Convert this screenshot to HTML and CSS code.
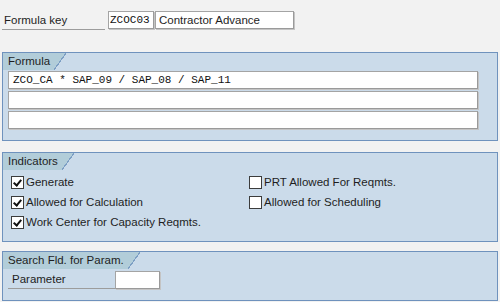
FILE: index.html
```html
<!DOCTYPE html>
<html>
<head>
<meta charset="utf-8">
<link rel="stylesheet" href="styles.css">
</head>
<body>
<div class="keyrow">
  <div class="keylabel">Formula key</div>
  <div class="field mono key">ZCOC03</div>
  <div class="field desc">Contractor Advance</div>
</div>

<section class="group g-formula">
  <div class="tab"><span>Formula</span></div>
  <div class="lines">
    <div class="field mono line">ZCO_CA * SAP_09 / SAP_08 / SAP_11</div>
    <div class="field line"></div>
    <div class="field line"></div>
  </div>
</section>

<section class="group g-ind">
  <div class="tab"><span>Indicators</span></div>
  <div class="checks">
    <div class="col">
      <label class="cb"><span class="box on"></span>Generate</label>
      <label class="cb"><span class="box on"></span>Allowed for Calculation</label>
      <label class="cb"><span class="box on"></span>Work Center for Capacity Reqmts.</label>
    </div>
    <div class="col">
      <label class="cb"><span class="box"></span>PRT Allowed For Reqmts.</label>
      <label class="cb"><span class="box"></span>Allowed for Scheduling</label>
    </div>
  </div>
</section>

<section class="group g-search">
  <div class="tab"><span>Search Fld. for Param.</span></div>
  <div class="paramrow">
    <div class="plabel">Parameter</div>
    <div class="field pinput"></div>
  </div>
</section>
</body>
</html>
```
FILE: styles.css
```css
html, body {
  margin: 0;
  padding: 0;
  background: #f2f2f2;
}
body {
  width: 500px;
  height: 302px;
  overflow: hidden;
  font-family: "Liberation Sans", Arial, sans-serif;
  font-size: 11.5px;
  color: #1e1e1e;
}
.keyrow {
  display: flex;
  align-items: flex-start;
  padding: 11px 0 0 2px;
  height: 19px;
}
.keylabel {
  width: 101px;
  height: 18px;
  line-height: 18px;
  padding-left: 2px;
  border-bottom: 1px solid #9c9c9c;
  margin-right: 3px;
}
.field {
  box-sizing: border-box;
  background: #fff;
  border: 1px solid #a4a4a4;
  border-right-color: #9a9a9a;
  border-bottom-color: #9a9a9a;
  box-shadow: 1px 1px 0 #c4c4c4;
  height: 18px;
  line-height: 16px;
  padding: 0 3px;
  white-space: nowrap;
  overflow: hidden;
}
.mono {
  font-family: "Liberation Mono", "Courier New", monospace;
  font-size: 11px;
  color: #111;
}
.key { width: 46px; padding: 0 1px; margin-right: 1px; }
.desc { width: 139px; }

.group {
  box-sizing: border-box;
  margin: 0 2px;
  border: 1px solid #6f92bd;
  background: #cbdbea;
}
.g-formula { margin-top: 22px; height: 89px; }
.g-ind { margin-top: 11px; height: 90px; }
.g-search { margin-top: 9px; height: 50px; }

.tab {
  display: flex;
  height: 17px;
}
.tab span {
  background: #b2cdd9;
  line-height: 17px;
  padding-left: 5px;
  padding-right: 4px;
  white-space: nowrap;
}
.tab::after {
  content: "";
  width: 12px;
  height: 17px;
  background: linear-gradient(to bottom right, #b2cdd9 0, #b2cdd9 calc(50% - 0.6px), #7d9fc4 calc(50% - 0.6px), #7d9fc4 calc(50% + 0.6px), transparent calc(50% + 0.6px));
}

.lines {
  display: flex;
  flex-direction: column;
  gap: 2px;
  padding: 1px 0 0 5px;
}
.line { width: 470px; padding-left: 4px; }

.checks {
  display: flex;
  padding: 2px 0 0 8px;
}
.col {
  display: flex;
  flex-direction: column;
}
.col:first-child { width: 238px; }
.cb {
  display: flex;
  align-items: center;
  height: 20px;
  gap: 2px;
}
.box {
  box-sizing: border-box;
  width: 13px;
  height: 13px;
  background: #fff;
  border: 1px solid #3c3c3c;
  position: relative;
}
.box.on::after {
  content: "";
  position: absolute;
  left: 3px;
  top: 1px;
  width: 3px;
  height: 6px;
  border: solid #111;
  border-width: 0 2px 2px 0;
  transform: rotate(40deg);
}

.paramrow {
  display: flex;
  padding: 2px 0 0 5px;
}
.plabel {
  width: 103px;
  height: 17px;
  line-height: 17px;
  padding-left: 4px;
  border-bottom: 1px solid #9c9c9c;
}
.pinput { width: 45px; }
```
